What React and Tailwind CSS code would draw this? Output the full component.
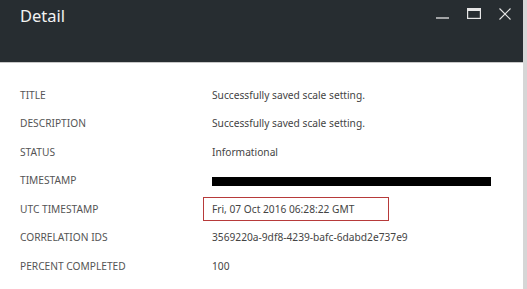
const rows = [
  ['TITLE', 'Successfully saved scale setting.'],
  ['DESCRIPTION', 'Successfully saved scale setting.'],
  ['STATUS', 'Informational'],
  ['TIMESTAMP', null],
  ['UTC TIMESTAMP', 'Fri, 07 Oct 2016 06:28:22 GMT'],
  ['CORRELATION IDS', '3569220a-9df8-4239-bafc-6dabd2e737e9'],
  ['PERCENT COMPLETED', '100'],
]

export default function App() {
  return (
    <div
      className="w-[527px] h-[289px] flex bg-white overflow-hidden"
      style={{ fontFamily: '"Segoe UI", "Noto Sans", "Open Sans", sans-serif' }}
    >
      <div className="flex-1 flex flex-col">
        {/* header */}
        <header className="h-[63px] shrink-0 bg-[#272d31] border-b border-[#c8c8c8] flex items-start justify-between pl-[20px] pr-[12px]">
          <h1 className="text-[16.5px] leading-none mt-[8px] text-[#f2f2f2]">Detail</h1>
          <div className="flex items-start gap-[18px] mt-[8px] text-[#e6e6e6]">
            <svg width="13" height="12" viewBox="0 0 13 12">
              <line x1="0" y1="10" x2="13" y2="10" stroke="currentColor" strokeWidth="1.3" />
            </svg>
            <svg width="14" height="11" viewBox="0 0 14 11">
              <rect x="0.6" y="0.6" width="12.8" height="9.8" fill="none" stroke="currentColor" strokeWidth="1.2" />
              <rect x="0" y="0" width="14" height="3" fill="currentColor" />
            </svg>
            <svg width="12" height="12" viewBox="0 0 12 12">
              <path d="M0.5 0.5 L11.5 11.5 M11.5 0.5 L0.5 11.5" stroke="currentColor" strokeWidth="1.1" />
            </svg>
          </div>
        </header>

        {/* details */}
        <div className="pt-[18px] pl-[20px] text-[10.2px] text-[#444]">
          {rows.map(([label, value]) => (
            <div key={label} className="h-[28.5px] flex items-center">
              <div className="w-[192px] shrink-0 text-[#555]">{label}</div>
              {label === 'TIMESTAMP' && <div className="w-[279px] h-[9px] bg-black translate-y-[1px]" />}
              {label === 'UTC TIMESTAMP' && (
                <div className="-ml-[9px] w-[186px] h-[24px] border border-[#b73a3a] flex items-center pl-[8px]">{value}</div>
              )}
              {label !== 'TIMESTAMP' && label !== 'UTC TIMESTAMP' && <div>{value}</div>}
            </div>
          ))}
        </div>
      </div>
      <div className="w-[4px] shrink-0 bg-[#d6d6d6]" />
    </div>
  )
}
